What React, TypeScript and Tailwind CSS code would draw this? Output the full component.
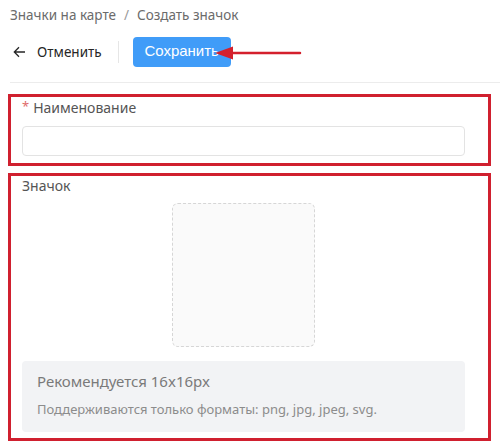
export default function App() {
  return (
    <div className="w-[500px] h-[447px] bg-white overflow-hidden font-['Noto_Sans',sans-serif] text-[#595959]">
      {/* Header */}
      <div className="pl-[10px]">
        <div className="h-[30px] flex items-center text-[13.5px] text-[#6b6b6b]">
          <span>Значки на карте</span>
          <span className="mx-[8px] text-[#9a9a9a]">/</span>
          <span>Создать значок</span>
        </div>
        <div className="relative h-[53px] border-b border-[#ececec] flex items-start pt-[7px]">
          <button className="h-[30px] flex items-center pl-[3px] text-[13.5px] text-[#262626]">
            <svg width="13" height="12" viewBox="0 0 13 12" fill="none" stroke="#262626" strokeWidth="1.3">
              <path d="M12 6H1.5M6 1.3L1.3 6L6 10.7" />
            </svg>
            <span className="ml-[11px]">Отменить</span>
          </button>
          <div className="ml-[16px] mt-[4px] w-px h-[22px] bg-[#e6e6e6]" />
          <button className="ml-[14px] h-[30px] w-[98px] rounded-[4px] bg-[#409cf8] text-white text-[15px] font-['Liberation_Sans',sans-serif] flex items-center justify-center pb-[1px]">
            Сохранить
          </button>
          {/* annotation arrow */}
          <svg className="absolute left-[204px] top-[15px]" width="90" height="16" viewBox="0 0 90 16">
            <path d="M1 8L19 1.5V14.5Z" fill="#d4202c" />
            <path d="M18 8H86" stroke="#d4202c" strokeWidth="2.5" strokeLinecap="round" />
          </svg>
        </div>
      </div>

      {/* Form */}
      <div className="pl-[8px] w-[491px] mt-[11px] flex flex-col gap-[7px]">
        <div className="border-[3px] border-[#d0202f] h-[72px] pl-[11px] pr-[23px]">
          <div className="h-[20px] flex items-center text-[14px] text-[#555]">
            <span className="text-[#e06a6a] mr-[4px] text-[13px]">*</span>
            Наименование
          </div>
          <div className="mt-[9px] h-[30px] rounded-[4px] border border-[#e3e3e3] bg-white" />
        </div>
        <div className="border-[3px] border-[#d0202f] h-[268px] pl-[11px] pr-[23px]">
          <div className="h-[18px] flex items-center text-[14px] text-[#555]">Значок</div>
          <div className="mt-[9px] flex justify-center">
            <div className="w-[143px] h-[144px] rounded-[6px] border border-dashed border-[#d6d6d6] bg-[#fafafa]" />
          </div>
          <div className="mt-[14px] h-[71px] rounded-[4px] bg-[#f2f3f5] pl-[15px] pt-[9px]">
            <div className="text-[15px] text-[#7a7a7a] leading-[22px]">Рекомендуется 16x16px</div>
            <div className="mt-[8px] text-[13px] text-[#8c8c8c] leading-[18px]">
              Поддерживаются только форматы: png, jpg, jpeg, svg.
            </div>
          </div>
        </div>
      </div>
    </div>
  );
}
